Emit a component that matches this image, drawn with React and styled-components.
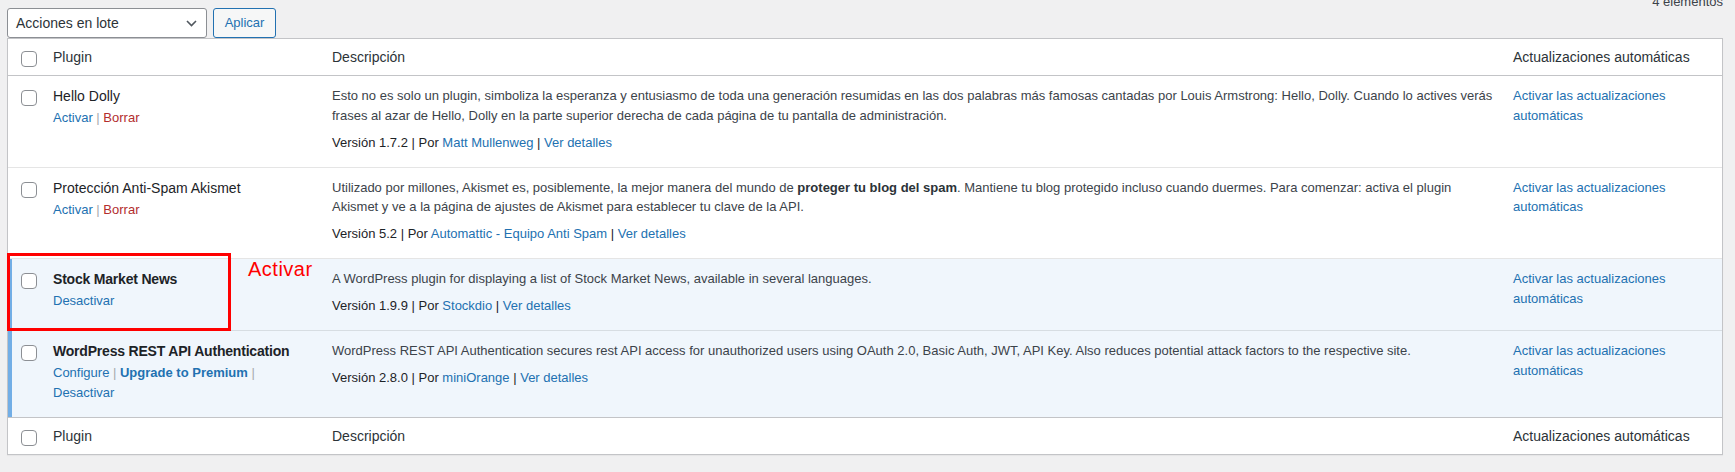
import React from 'react';
import styled, { createGlobalStyle } from 'styled-components';

const GlobalStyle = createGlobalStyle`
  html, body { margin: 0; padding: 0; background: #f0f0f1; }
  body {
    font-family: "Liberation Sans", Arial, sans-serif;
    font-size: 13px;
    line-height: 1.5;
    color: #3c434a;
  }
  * { box-sizing: border-box; }
`;

const Page = styled.div`
  padding: 0 12px 16px 7px;
`;

const Toolbar = styled.div`
  display: flex;
  align-items: flex-start;
  gap: 6px;
  height: 38px;
`;

const BulkSelect = styled.div`
  margin-top: 8px;
  width: 200px;
  height: 30px;
  border: 1px solid #8c8f94;
  border-radius: 3px;
  background: #fff;
  display: flex;
  align-items: center;
  justify-content: space-between;
  padding: 0 9px 0 8px;
  font-size: 14px;
  color: #2c3338;
`;

const ApplyButton = styled.button`
  margin-top: 8px;
  height: 30px;
  min-width: 63px;
  padding: 0 10px;
  border: 1px solid #2271b1;
  border-radius: 3px;
  background: #f6f7f7;
  color: #2271b1;
  font-family: inherit;
  font-size: 13px;
  line-height: 28px;
  cursor: pointer;
`;

const Count = styled.span`
  margin-left: auto;
  margin-top: -8px;
  font-size: 13px;
  line-height: 19.5px;
  color: #3c434a;
`;

const TableWrap = styled.div`
  position: relative;
`;

const Table = styled.table`
  width: 100%;
  table-layout: fixed;
  border-collapse: separate;
  border-spacing: 0;
  background: #fff;
  border: 1px solid #c3c4c7;
  box-shadow: 0 1px 1px rgba(0, 0, 0, 0.04);
`;

const Col = styled.col`
  width: ${(p) => (p.$w ? `${p.$w}px` : 'auto')};
`;

const HeadCell = styled.th`
  text-align: left;
  font-weight: 400;
  font-size: 14px;
  line-height: 20px;
  color: #2c3338;
  padding: 8px 10px;
  vertical-align: top;
  border-${(p) => (p.$foot ? 'top' : 'bottom')}: 1px solid #c3c4c7;
`;

const HeadCheckCell = styled(HeadCell)`
  padding: 12px 0 0 13px;
`;

const Row = styled.tr`
  background: ${(p) => (p.$active ? '#f0f6fc' : '#fff')};
  & > * {
    box-shadow: inset 0 -1px 0 rgba(0, 0, 0, 0.1);
  }
  &:last-child > * {
    box-shadow: none;
  }
`;

const CheckCell = styled.th`
  padding: 14px 0 0 13px;
  vertical-align: top;
  text-align: left;
  font-weight: 400;
  && {
    box-shadow: ${(p) =>
      p.$active
        ? `inset 4px 0 0 #72aee6${p.$last ? '' : ', inset 0 -1px 0 rgba(0,0,0,0.1)'}`
        : p.$last
        ? 'none'
        : 'inset 0 -1px 0 rgba(0,0,0,0.1)'};
  }
`;

const Cell = styled.td`
  padding: 10px 10px ${(p) => (p.$name ? '14px' : '15.5px')};
  vertical-align: top;
`;

const Checkbox = styled.input.attrs({ type: 'checkbox' })`
  appearance: none;
  display: block;
  width: 16px;
  height: 16px;
  margin: 0;
  border: 1px solid #8c8f94;
  border-radius: 4px;
  background: #fff;
`;

const Title = styled.strong`
  display: block;
  margin-bottom: 2px;
  font-size: 14px;
  line-height: 20px;
  color: #1d2327;
  font-weight: ${(p) => (p.$active ? 700 : 400)};
  letter-spacing: ${(p) => (p.$active ? '-0.2px' : '0')};
  white-space: nowrap;
`;

const Actions = styled.div`
  font-size: 13px;
  line-height: 20px;
`;

const Sep = styled.span`
  color: #a7aaad;
`;

const Link = styled.a`
  color: ${(p) => (p.$danger ? '#b32d2e' : '#2271b1')};
  font-weight: ${(p) => (p.$bold ? 700 : 400)};
  text-decoration: none;
  cursor: pointer;
`;

const Description = styled.p`
  margin: 0 0 7.5px;
  line-height: 19.5px;
  color: #3c434a;
  strong {
    font-weight: 700;
    color: #2c3338;
  }
`;

const VersionLine = styled.div`
  line-height: 19.5px;
  color: #1d2327;
`;

const AutoLink = styled(Link)`
  line-height: 19.5px;
`;

const Annotation = styled.div`
  position: absolute;
  left: 0;
  top: 215px;
  width: 224px;
  height: 78px;
  border: 3px solid #ff0000;
  pointer-events: none;
`;

const AnnotationLabel = styled.span`
  position: absolute;
  left: 241px;
  top: 221px;
  font-size: 20px;
  line-height: 20px;
  letter-spacing: 0.5px;
  color: #ff0000;
`;

const Chevron = () => (
  <svg width="11" height="7" viewBox="0 0 11 7" fill="none">
    <path d="M1 1 L5.5 5.5 L10 1" stroke="#50575e" strokeWidth="1.6" />
  </svg>
);

const plugins = [
  {
    name: 'Hello Dolly',
    active: false,
    actions: [{ label: 'Activar' }, { label: 'Borrar', danger: true }],
    desc: 'Esto no es solo un plugin, simboliza la esperanza y entusiasmo de toda una generación resumidas en las dos palabras más famosas cantadas por Louis Armstrong: Hello, Dolly. Cuando lo actives verás frases al azar de Hello, Dolly en la parte superior derecha de cada página de tu pantalla de administración.',
    version: '1.7.2',
    author: 'Matt Mullenweg',
  },
  {
    name: 'Protección Anti-Spam Akismet',
    active: false,
    actions: [{ label: 'Activar' }, { label: 'Borrar', danger: true }],
    desc: (
      <>
        Utilizado por millones, Akismet es, posiblemente, la mejor manera del mundo de{' '}
        <strong>proteger tu blog del spam</strong>. Mantiene tu blog protegido incluso cuando
        duermes. Para comenzar: activa el plugin Akismet y ve a la página de ajustes de Akismet
        para establecer tu clave de la API.
      </>
    ),
    version: '5.2',
    author: 'Automattic - Equipo Anti Spam',
  },
  {
    name: 'Stock Market News',
    active: true,
    actions: [{ label: 'Desactivar' }],
    desc: 'A WordPress plugin for displaying a list of Stock Market News, available in several languages.',
    version: '1.9.9',
    author: 'Stockdio',
  },
  {
    name: 'WordPress REST API Authentication',
    active: true,
    actions: [
      { label: 'Configure' },
      { label: 'Upgrade to Premium', bold: true },
      { label: 'Desactivar' },
    ],
    desc: 'WordPress REST API Authentication secures rest API access for unauthorized users using OAuth 2.0, Basic Auth, JWT, API Key. Also reduces potential attack factors to the respective site.',
    version: '2.8.0',
    author: 'miniOrange',
  },
];

const HeaderRow = ({ foot }) => (
  <tr>
    <HeadCheckCell $foot={foot}>
      <Checkbox />
    </HeadCheckCell>
    <HeadCell $foot={foot}>Plugin</HeadCell>
    <HeadCell $foot={foot}>Descripción</HeadCell>
    <HeadCell $foot={foot}>Actualizaciones automáticas</HeadCell>
  </tr>
);

export default function App() {
  return (
    <>
      <GlobalStyle />
      <Page>
        <Toolbar>
          <BulkSelect>
            <span>Acciones en lote</span>
            <Chevron />
          </BulkSelect>
          <ApplyButton>Aplicar</ApplyButton>
          <Count>4 elementos</Count>
        </Toolbar>
        <TableWrap>
          <Table>
            <colgroup>
              <Col $w={35} />
              <Col $w={279} />
              <Col />
              <Col $w={219} />
            </colgroup>
            <thead>
              <HeaderRow />
            </thead>
            <tbody>
              {plugins.map((p, i) => {
                const last = i === plugins.length - 1;
                return (
                  <Row key={p.name} $active={p.active}>
                    <CheckCell $active={p.active} $last={last}>
                      <Checkbox />
                    </CheckCell>
                    <Cell $name>
                      <Title $active={p.active}>{p.name}</Title>
                      <Actions>
                        {p.actions.map((a, j) => (
                          <React.Fragment key={a.label}>
                            {j > 0 && <Sep> | </Sep>}
                            <Link $danger={a.danger} $bold={a.bold}>
                              {a.label}
                            </Link>
                          </React.Fragment>
                        ))}
                      </Actions>
                    </Cell>
                    <Cell>
                      <Description>{p.desc}</Description>
                      <VersionLine>
                        Versión {p.version} | Por <Link>{p.author}</Link> | <Link>Ver detalles</Link>
                      </VersionLine>
                    </Cell>
                    <Cell>
                      <AutoLink>Activar las actualizaciones automáticas</AutoLink>
                    </Cell>
                  </Row>
                );
              })}
            </tbody>
            <tfoot>
              <HeaderRow foot />
            </tfoot>
          </Table>
          <Annotation />
          <AnnotationLabel>Activar</AnnotationLabel>
        </TableWrap>
      </Page>
    </>
  );
}
